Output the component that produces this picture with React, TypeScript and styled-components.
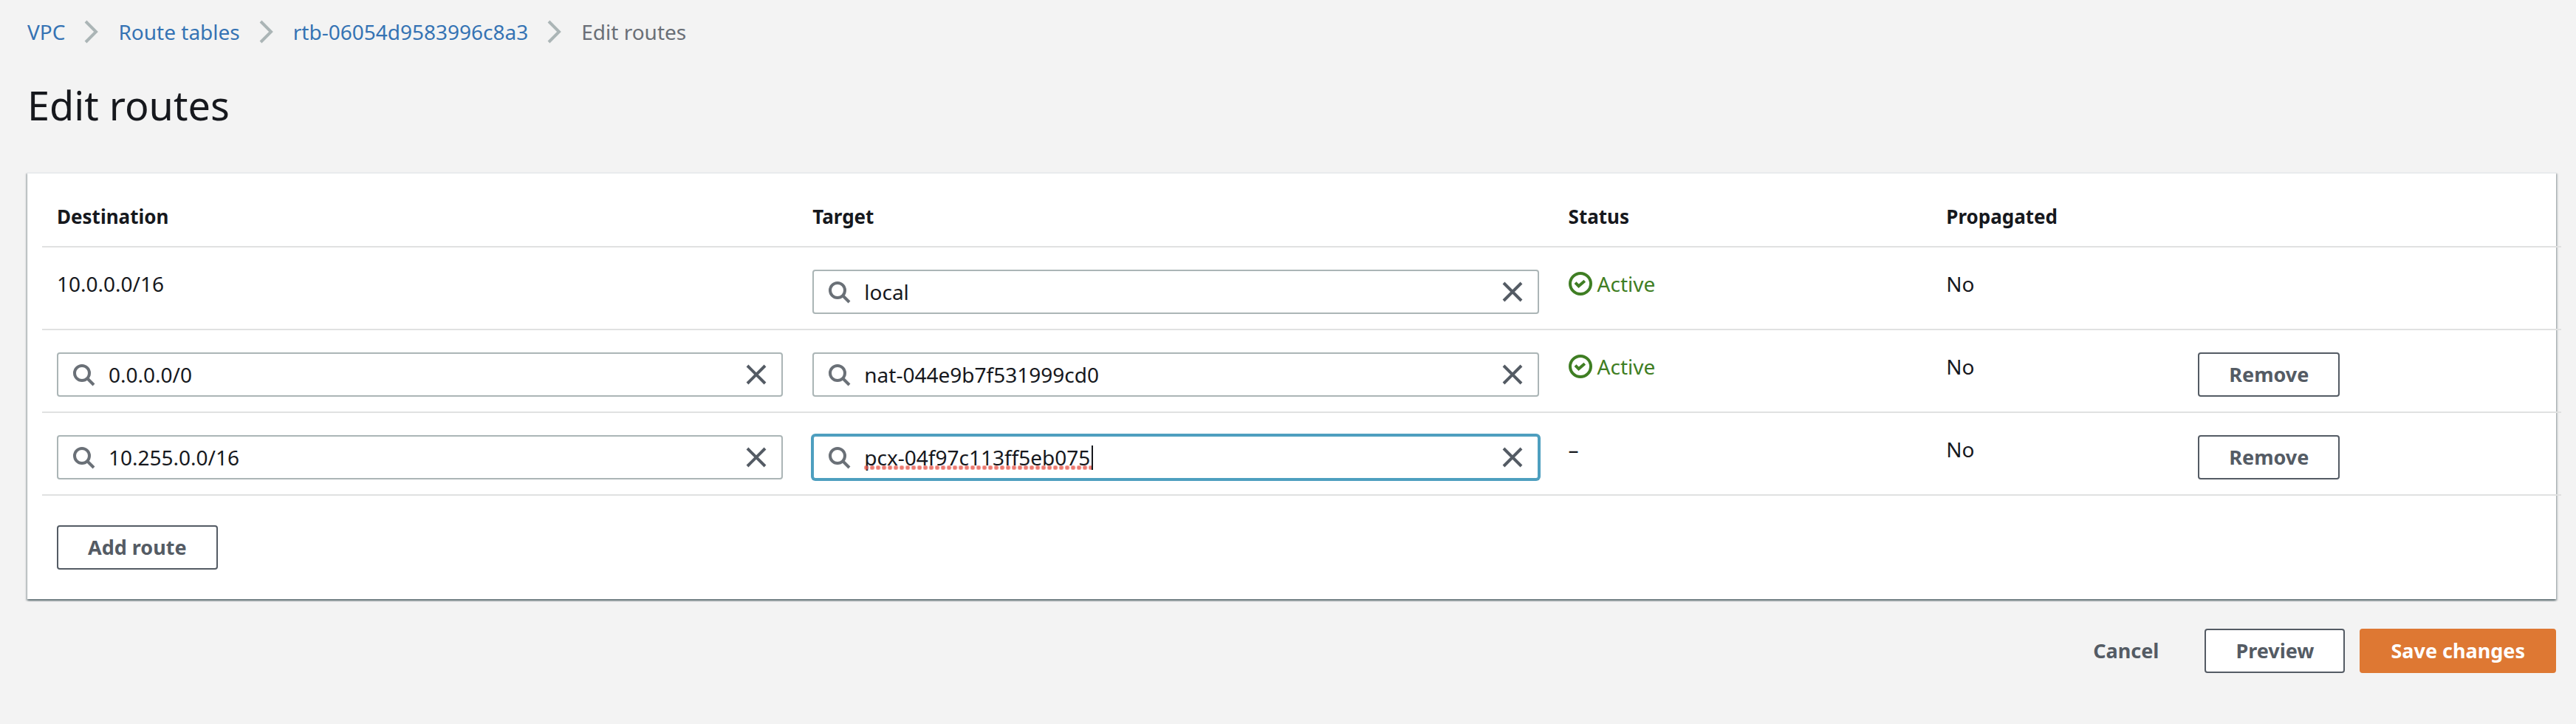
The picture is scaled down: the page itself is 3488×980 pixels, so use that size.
import React, { useState } from 'react';
import styled, { createGlobalStyle, css } from 'styled-components';

const GlobalStyle = createGlobalStyle`
  *, *::before, *::after { box-sizing: border-box; }
  body {
    margin: 0;
    background: #f3f3f3;
    color: #16181d;
    font-family: "Noto Sans", "Open Sans", sans-serif;
    font-size: 28px;
    line-height: 38px;
  }
  button, input { font: inherit; color: inherit; }
`;

const Page = styled.main`
  padding: 24px 27px 68px 37px;
`;

const BreadcrumbList = styled.ol`
  display: flex;
  align-items: center;
  gap: 20px;
  margin: 0 0 47px;
  padding: 0;
  list-style: none;
`;

const Crumb = styled.li`
  display: flex;
  align-items: center;
  gap: 20px;
  color: #6a6f77;
`;

const CrumbLink = styled.a`
  color: #3573b4;
  text-decoration: none;
`;

const Icon = styled.svg<{ $color: string }>`
  display: block;
  flex: none;
  width: 32px;
  height: 32px;
  fill: none;
  stroke: ${(p) => p.$color};
  stroke-width: 2;
`;

const Title = styled.h1`
  margin: 0 0 58px;
  font-size: 54px;
  line-height: 66px;
  font-weight: 400;
`;

const Card = styled.section`
  padding-bottom: 40px;
  background: #fff;
  border-top: 2px solid #e9ebed;
  box-shadow:
    0 2px 2px 0 rgba(0, 28, 36, 0.4),
    2px 2px 2px 0 rgba(0, 28, 36, 0.2),
    -2px 2px 2px 0 rgba(0, 28, 36, 0.2);
`;

/* The rows run slightly past the right edge of the card. */
const RouteTable = styled.table`
  width: calc(100% - 13px);
  margin-left: 20px;
  table-layout: fixed;
  border-collapse: separate;
  border-spacing: 0;
`;

const Column = styled.col<{ $share: number }>`
  width: ${(p) => p.$share}%;
`;

const HeaderCell = styled.th`
  padding: 39px 20px 21px;
  border-bottom: 2px solid #e0e1e1;
  font-size: 26px;
  font-weight: 700;
  text-align: left;
`;

const Cell = styled.td`
  height: 112px;
  padding: 30px 20px 20px;
  border-bottom: 2px solid #e0e1e1;
  vertical-align: top;
`;

const Field = styled.div<{ $active?: boolean }>`
  position: relative;
  display: flex;
  align-items: center;
  gap: 18px;
  height: 60px;
  padding: 0 18px;
  background: #fff;
  border: 2px solid #abb5b6;
  border-radius: 4px;
  ${(p) =>
    p.$active &&
    css`
      border-color: #4e9fbf;
      box-shadow: 0 0 0 2px #4e9fbf;
    `}
`;

const FieldInput = styled.input`
  flex: 1;
  min-width: 0;
  height: 56px;
  padding: 0;
  border: 0;
  outline: 0;
  background: transparent;
`;

const ClearButton = styled.button`
  padding: 0;
  border: 0;
  background: none;
  cursor: pointer;
`;

/* Spelling underline with the text caret at its end. */
const SpellingMark = styled.span`
  position: absolute;
  left: 68px;
  bottom: 11px;
  width: 310px;
  height: 33px;
  border-right: 2px solid #16181d;
  background: radial-gradient(circle at 3px 3px, rgba(232, 88, 76, 0.8) 2px, transparent 4px) left
    bottom / 8px 6px repeat-x;
  pointer-events: none;
`;

const Status = styled.span`
  display: flex;
  align-items: center;
  gap: 7px;
  color: #3f7e23;
`;

const Button = styled.button<{ $variant?: 'normal' | 'primary' | 'link' }>`
  height: 60px;
  padding: 0 40px;
  border: 2px solid #545b64;
  border-radius: 4px;
  background: #fff;
  color: #545b64;
  font-size: 27px;
  font-weight: 700;
  cursor: pointer;
  ${(p) =>
    p.$variant === 'primary' &&
    css`
      border-color: #de7833;
      background: #de7833;
      color: #fff;
    `}
  ${(p) =>
    p.$variant === 'link' &&
    css`
      border-color: transparent;
      background: transparent;
    `}
`;

const TableFooter = styled.div`
  padding: 40px 40px 0;
`;

const PageActions = styled.footer`
  display: flex;
  justify-content: flex-end;
  gap: 20px;
  margin-top: 40px;
`;

const ChevronIcon = () => (
  <Icon viewBox="0 0 16 16" $color="#abb5b6" aria-hidden="true">
    <path d="M4 1l7 7-7 7" />
  </Icon>
);

const SearchIcon = () => (
  <Icon viewBox="0 0 16 16" $color="#6a7077" aria-hidden="true">
    <circle cx="7" cy="7" r="5" />
    <path d="M15 15l-4.5-4.5" />
  </Icon>
);

const CloseIcon = () => (
  <Icon viewBox="0 0 16 16" $color="#545b64" aria-hidden="true">
    <path d="M2 2l12 12M14 2L2 14" />
  </Icon>
);

const SuccessIcon = () => (
  <Icon viewBox="0 0 16 16" $color="#3f7e23" aria-hidden="true">
    <circle cx="8" cy="8" r="7" />
    <path d="M4.5 7.3l2.3 2.3 4.1-3.5" />
  </Icon>
);

interface SearchFieldProps {
  label: string;
  initial: string;
  active?: boolean;
}

function SearchField({ label, initial, active }: SearchFieldProps) {
  const [value, setValue] = useState(initial);
  return (
    <Field $active={active}>
      <SearchIcon />
      <FieldInput
        type="text"
        aria-label={label}
        spellCheck={false}
        value={value}
        onChange={(e) => setValue(e.target.value)}
      />
      <ClearButton type="button" aria-label="Clear" onClick={() => setValue('')}>
        <CloseIcon />
      </ClearButton>
      {active && value === initial && <SpellingMark />}
    </Field>
  );
}

interface Route {
  destination: string;
  target: string;
  active: boolean;
  local?: boolean;
  editing?: boolean;
}

const initialRoutes: Route[] = [
  { destination: '10.0.0.0/16', target: 'local', active: true, local: true },
  { destination: '0.0.0.0/0', target: 'nat-044e9b7f531999cd0', active: true },
  { destination: '10.255.0.0/16', target: 'pcx-04f97c113ff5eb075', active: false, editing: true },
];

const crumbs = ['VPC', 'Route tables', 'rtb-06054d9583996c8a3'];

export default function App() {
  const [routes, setRoutes] = useState(initialRoutes);

  const addRoute = () => setRoutes([...routes, { destination: '', target: '', active: false }]);
  const removeRoute = (route: Route) => setRoutes(routes.filter((r) => r !== route));

  return (
    <>
      <GlobalStyle />
      <Page>
        <nav aria-label="Breadcrumb">
          <BreadcrumbList>
            {crumbs.map((name) => (
              <Crumb key={name}>
                <CrumbLink href="#">{name}</CrumbLink>
                <ChevronIcon />
              </Crumb>
            ))}
            <Crumb aria-current="page">Edit routes</Crumb>
          </BreadcrumbList>
        </nav>

        <Title>Edit routes</Title>

        <Card>
          <RouteTable>
            <colgroup>
              <Column $share={30} />
              <Column $share={30} />
              <Column $share={15} />
              <Column $share={10} />
              <Column $share={15} />
            </colgroup>
            <thead>
              <tr>
                <HeaderCell scope="col">Destination</HeaderCell>
                <HeaderCell scope="col">Target</HeaderCell>
                <HeaderCell scope="col">Status</HeaderCell>
                <HeaderCell scope="col">Propagated</HeaderCell>
                <HeaderCell as="td" />
              </tr>
            </thead>
            <tbody>
              {routes.map((route, i) => (
                <tr key={i}>
                  <Cell>
                    {route.local ? (
                      route.destination
                    ) : (
                      <SearchField label="Destination" initial={route.destination} />
                    )}
                  </Cell>
                  <Cell>
                    <SearchField label="Target" initial={route.target} active={route.editing} />
                  </Cell>
                  <Cell>
                    {route.active ? (
                      <Status>
                        <SuccessIcon />
                        Active
                      </Status>
                    ) : (
                      '–'
                    )}
                  </Cell>
                  <Cell>No</Cell>
                  <Cell>
                    {!route.local && (
                      <Button type="button" onClick={() => removeRoute(route)}>
                        Remove
                      </Button>
                    )}
                  </Cell>
                </tr>
              ))}
            </tbody>
          </RouteTable>
          <TableFooter>
            <Button type="button" onClick={addRoute}>
              Add route
            </Button>
          </TableFooter>
        </Card>

        <PageActions>
          <Button type="button" $variant="link">
            Cancel
          </Button>
          <Button type="button">Preview</Button>
          <Button type="button" $variant="primary">
            Save changes
          </Button>
        </PageActions>
      </Page>
    </>
  );
}
